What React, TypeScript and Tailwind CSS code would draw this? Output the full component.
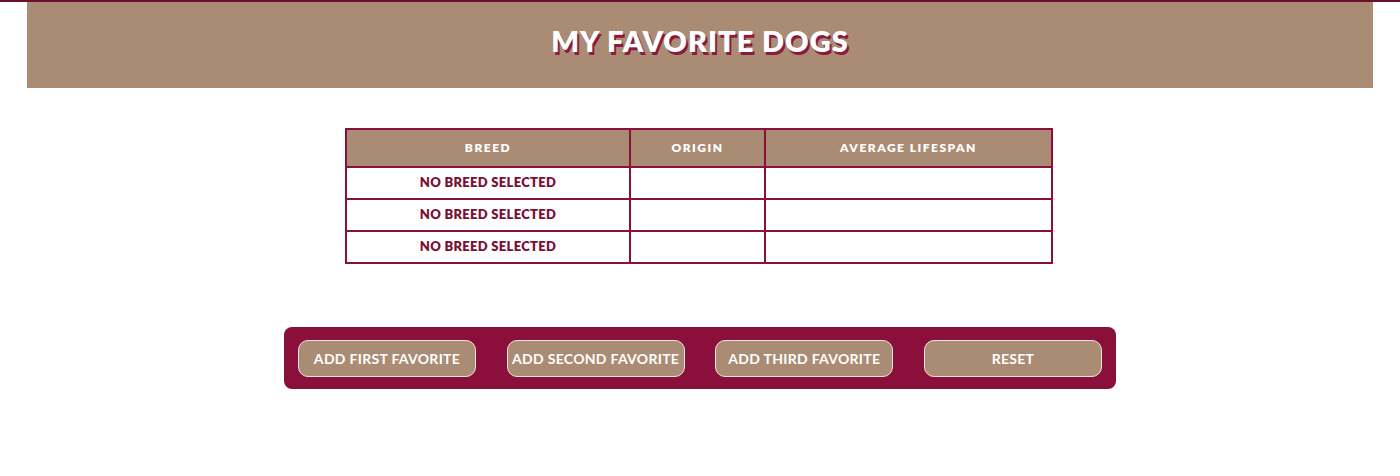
import React from "react";

const rows = ["No breed selected", "No breed selected", "No breed selected"];
const buttons = ["Add first favorite", "Add second favorite", "Add third favorite", "Reset"];

export default function App() {
  return (
    <div className="min-h-screen bg-white border-t-2 border-[#6b0f2b] font-['Lato','Open_Sans',sans-serif]">
      <header className="mx-[27px] h-[86px] bg-[#aa8c74] flex items-center justify-center">
        <h1 className="text-[29px] font-extrabold uppercase tracking-[1px] text-white [text-shadow:2px_3px_0_#8b1a3f] -mt-2">
          My Favorite Dogs
        </h1>
      </header>

      <div className="flex justify-center mt-10">
        <table className="w-[708px] -translate-x-px border-collapse border-2 border-[#8b0f3b] text-center">
          <thead>
            <tr className="bg-[#aa8c74] h-[38px]">
              <th className="w-[284px] border-2 border-[#8b0f3b] text-white text-[12px] font-extrabold uppercase tracking-[1.5px]">
                Breed
              </th>
              <th className="w-[135px] border-2 border-[#8b0f3b] text-white text-[12px] font-extrabold uppercase tracking-[1.5px]">
                Origin
              </th>
              <th className="border-2 border-[#8b0f3b] text-white text-[12px] font-extrabold uppercase tracking-[1.5px]">
                Average Lifespan
              </th>
            </tr>
          </thead>
          <tbody>
            {rows.map((r, i) => (
              <tr key={i} className="h-[32px]">
                <td className="border-2 border-[#8b0f3b] text-[#7a0f35] text-[13px] font-extrabold uppercase tracking-[0.3px]">
                  {r}
                </td>
                <td className="border-2 border-[#8b0f3b]"></td>
                <td className="border-2 border-[#8b0f3b]"></td>
              </tr>
            ))}
          </tbody>
        </table>
      </div>

      <div className="flex justify-center mt-[63px]">
        <div className="w-[832px] h-[62px] bg-[#8b0f3b] rounded-lg flex items-center justify-between px-[14px]">
          {buttons.map((b) => (
            <button
              key={b}
              className="w-[178px] h-[37px] rounded-[10px] border-[1.5px] border-[#f3e3e3] bg-[#aa8c74] text-white text-[14px] font-bold uppercase tracking-[0.3px]"
            >
              {b}
            </button>
          ))}
        </div>
      </div>
    </div>
  );
}
